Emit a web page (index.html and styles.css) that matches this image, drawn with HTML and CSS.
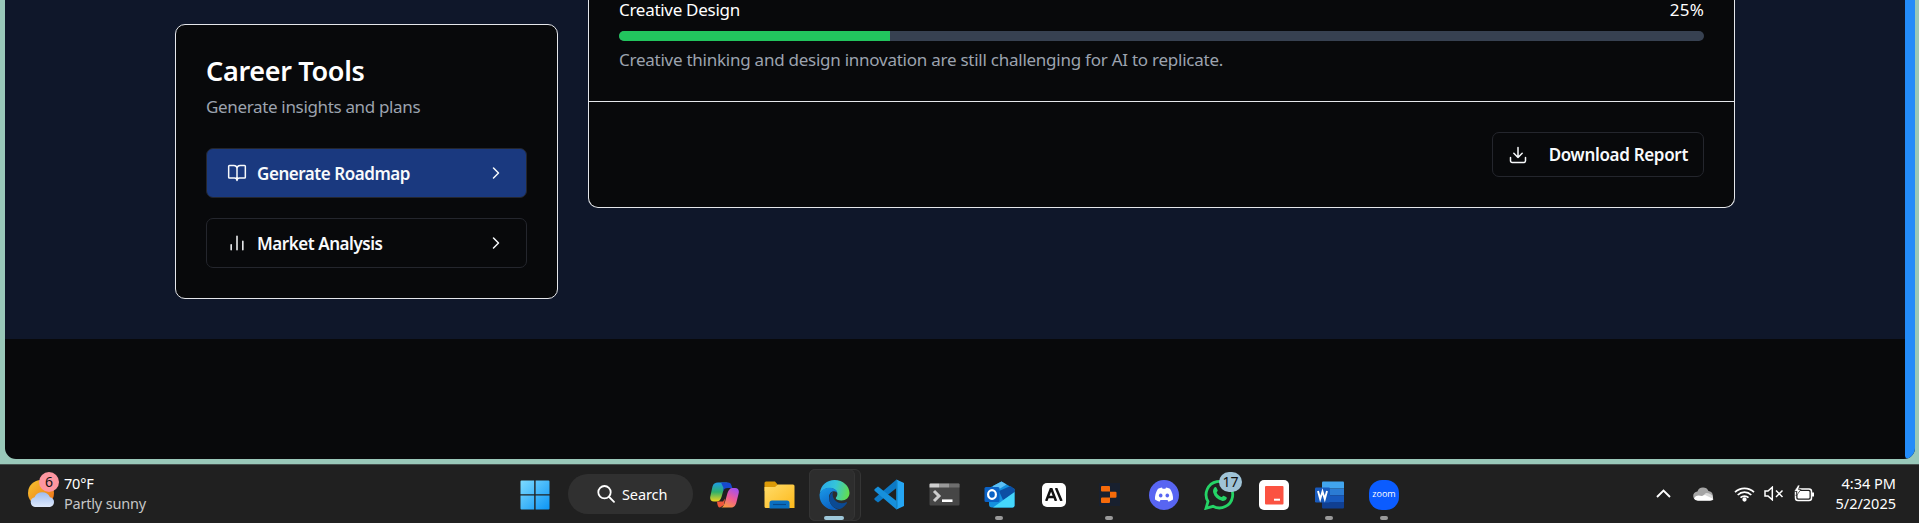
FILE: index.html
```html
<!DOCTYPE html>
<html lang="en">
<head>
<meta charset="utf-8">
<title>Career Tools</title>
<link rel="stylesheet" href="styles.css">
</head>
<body>
<div class="desktop">
  <div class="window">
    <main class="page">
      <aside class="card tools">
        <h2 class="tools-title">Career Tools</h2>
        <p class="tools-sub">Generate insights and plans</p>
        <button class="tool primary">
          <svg class="tool-icon" viewBox="0 0 24 24"><path d="M12 7v14M3 18a1 1 0 0 1-1-1V4a1 1 0 0 1 1-1h5a4 4 0 0 1 4 4 4 4 0 0 1 4-4h5a1 1 0 0 1 1 1v13a1 1 0 0 1-1 1h-6a3 3 0 0 0-3 3 3 3 0 0 0-3-3z"/></svg>
          <span>Generate Roadmap</span>
          <svg class="chev" viewBox="0 0 24 24"><path d="m9 18 6-6-6-6"/></svg>
        </button>
        <button class="tool">
          <svg class="tool-icon" viewBox="0 0 24 24"><path d="M5 20v-6M12 20V4M19 20V10"/></svg>
          <span>Market Analysis</span>
          <svg class="chev" viewBox="0 0 24 24"><path d="m9 18 6-6-6-6"/></svg>
        </button>
      </aside>
      <section class="card report">
        <div class="skill">
          <div class="skill-head"><span>Creative Design</span><span class="pct">25%</span></div>
          <div class="bar"><div class="fill" style="width:25%"></div></div>
          <p class="skill-note">Creative thinking and design innovation are still challenging for AI to replicate.</p>
        </div>
        <div class="report-foot">
          <button class="download">
            <svg class="dl-icon" viewBox="0 0 24 24"><path d="M21 15v4a2 2 0 0 1-2 2H5a2 2 0 0 1-2-2v-4M7 10l5 5 5-5M12 15V3"/></svg>
            <span>Download Report</span>
          </button>
        </div>
      </section>
    </main>
    <div class="scroll"></div>
  </div>
  <footer class="taskbar">
    <div class="weather">
      <div class="weather-icon">
        <svg width="30" height="32" viewBox="0 0 30 32">
          <defs>
            <linearGradient id="sun" x1="0" y1="0" x2="1" y2="1"><stop offset="0" stop-color="#f6c52f"/><stop offset="1" stop-color="#ee6c16"/></linearGradient>
            <linearGradient id="cloud" x1="0" y1="0" x2="0" y2="1"><stop offset="0" stop-color="#9dbcf0"/><stop offset="1" stop-color="#dfe9fb"/></linearGradient>
          </defs>
          <circle cx="13" cy="15" r="13" fill="url(#sun)"/>
          <path d="M7 29a5 5 0 0 1-.5-9.800 8.500 8.500 0 0 1 15.500 0A5 5 0 0 1 22 29z" fill="url(#cloud)"/>
        </svg>
        <span class="badge pink">6</span>
      </div>
      <div class="weather-text"><span>70°F</span><span class="dim">Partly sunny</span></div>
    </div>
    <div class="apps">
      <div class="app">
        <svg width="30" height="30" viewBox="0 0 30 30"><defs><linearGradient id="win" gradientUnits="userSpaceOnUse" x1="0" y1="0" x2="30" y2="30"><stop offset="0" stop-color="#7fdcff"/><stop offset="1" stop-color="#0a93f5"/></linearGradient></defs><path fill="url(#win)" d="M1.500.5H14.200V14.200H.5V1.500a1 1 0 0 1 1-1zM15.600.5H28.500a1 1 0 0 1 1 1V14.200H15.600zM.5 15.600H14.200V29.500H1.500a1 1 0 0 1-1-1zM15.600 15.600H29.500V28.500a1 1 0 0 1-1 1H15.600z"/></svg>
      </div>
      <div class="search"><svg width="18" height="18" viewBox="0 0 18 18" fill="none" stroke="#fff" stroke-width="1.800" stroke-linecap="round"><circle cx="7.500" cy="7.200" r="6.200"/><path d="m12.200 12 4.800 4.800"/></svg><span>Search</span></div>
      <div class="app">
        <svg width="29" height="26" viewBox="0 0 29 26"><defs>
          <linearGradient id="cp1" x1="0" y1="0" x2="0" y2="1"><stop offset="0" stop-color="#1d9be8"/><stop offset=".5" stop-color="#2fb06b"/><stop offset="1" stop-color="#f3d51d"/></linearGradient>
          <linearGradient id="cp2" x1=".8" y1="0" x2=".3" y2="1"><stop offset="0" stop-color="#a050f2"/><stop offset=".5" stop-color="#ee5b97"/><stop offset="1" stop-color="#fb9a3c"/></linearGradient></defs>
          <path d="M8 .5h11c-3 0-4 2-5 5.500l-2.500 9c-1 3-2.500 4.500-5 4.500H4c-3.500 0-4.500-2.500-3.500-6l2-9C3.500 1.500 5 .5 8 .5z" fill="url(#cp1)"/>
          <path d="M11 .5h7c2 0 3 1.200 3.500 3l.8 2.500H18c-3 0-4 1-5 3.500L13.500 6z" fill="#1748cf"/>
          <path d="M7 19.500h6l2-3-1 6.500-4 2.500c-2 0-2.500-2-3-6z" fill="#f0573b"/>
          <path d="M21 25.500H10c3 0 4-2 5-5.500l2.500-9c1-3 2.500-5 5-5H25c3.500 0 4.500 2.500 3.500 6l-2 8c-1 4-2.500 5.500-5.500 5.500z" fill="url(#cp2)"/></svg>
      </div>
      <div class="app">
        <svg width="31" height="28" viewBox="0 0 31 28"><defs><linearGradient id="fold" x1="0" y1="0" x2="1" y2="1"><stop offset="0" stop-color="#ffdc6a"/><stop offset="1" stop-color="#fdb91b"/></linearGradient></defs><path d="M.5 2a1.500 1.500 0 0 1 1.500-1.500h9L14 4H29v6H.5z" fill="#dc9a07"/><path d="M.5 6H11l3-2.500H29a1.500 1.500 0 0 1 1.500 1.500V27H2A1.500 1.500 0 0 1 .5 25.500z" fill="url(#fold)"/><path d="M5.500 27.500V22a2.500 2.500 0 0 1 2.500-2.500h15a2.500 2.500 0 0 1 2.500 2.500v5.500z" fill="#0a6fc0"/><path d="M9 23.500h13" stroke="#07498b" stroke-width="1.200"/></svg>
      </div>
      <div class="app active">
        <svg width="31" height="30" viewBox="0 0 31 30"><defs>
          <linearGradient id="e1" x1="0" y1=".3" x2="1" y2=".5"><stop offset="0" stop-color="#29a9ea"/><stop offset=".5" stop-color="#35c5d9"/><stop offset="1" stop-color="#62dd50"/></linearGradient>
          <linearGradient id="e2" x1="0" y1="0" x2=".5" y2="1"><stop offset="0" stop-color="#1a9ae8"/><stop offset="1" stop-color="#0b62c4"/></linearGradient></defs>
          <path d="M.8 13C2 5 8 0 15.500 0 24 0 30.500 6 30.500 13c0 4.500-3.500 7.500-8 7.500-3.500 0-5.700-1.200-5.700-2.300 0-.8 1.600-1.700 1.600-4.200 0-3.500-3.500-6-7.500-6C6.500 8 3 10 .8 13z" fill="url(#e1)"/>
          <path d="M.6 14C2 10 6 7.800 10.500 7.800c4.500 0 8 2.500 8 6.200 0-1.500-2-3-4-2.700-3 .4-4.500 3.200-4.500 6.200 0 5.500 4 11 9.500 12-1.300.3-2.600.5-4 .5C7 30-.3 23 .6 14z" fill="url(#e2)"/>
          <path d="M14 11.400c-4.500 3-5 9-1.500 13.600 2.500 3.300 6.500 4.500 8.500 4 3-1 5.500-3.500 7-6 .3-.7-.3-1-.9-.7-3 1.500-7.500 1.300-10.300-1.300C13.800 18.300 13 14.500 14 11.400z" fill="#0b4a93"/></svg>
        <i class="run wide"></i>
      </div>
      <div class="app">
        <svg width="31" height="31" viewBox="0 0 31 31"><path d="M22.500.5 30 4V27l-7.500 3.500z" fill="#25a6f4"/><path d="M22.500.5V9L4 23.500.8 21c-.6-.6-.6-1.300 0-1.900z" fill="#0c79c6"/><path d="M22.500 30.500V22L4 7.500.8 10c-.6.600-.6 1.300 0 1.900z" fill="#1690dc"/><path d="M22.500.5 24 3v25l-1.500 2.500z" fill="#1593de"/></svg>
      </div>
      <div class="app">
        <svg width="31" height="23" viewBox="0 0 31 23"><rect x=".5" y=".5" width="30" height="22" rx="1" fill="#464646"/><path d="M.5 1.500a1 1 0 0 1 1-1H10v4H.5z" fill="#cfcfcf"/><path d="M10 .5h10v4H10z" fill="#9a9a9a"/><path d="M20 .5h9.500a1 1 0 0 1 1 1v3H20z" fill="#6e6e6e"/><path d="m5 8 5 5-5 5" fill="none" stroke="#ccc" stroke-width="3"/><path d="M13 17.700h10.500" stroke="#fff" stroke-width="2.600"/></svg>
      </div>
      <div class="app">
        <svg width="31" height="27" viewBox="0 0 31 27"><path d="M5 7 17.500.5 30.500 8v16.500a2 2 0 0 1-2 2H8a3 3 0 0 1-3-3z" fill="#1490df"/><path d="m15 10 11.500-5L30.500 8v4L19 19z" fill="#0c4fa3"/><path d="m9 5 8.500-4.500 5 2.900L9 12z" fill="#5cc0f5"/><path d="M30.500 11v13.500a2 2 0 0 1-2 2H9z" fill="#45d7fb"/><rect x=".5" y="6" width="15" height="15" rx="1.500" fill="#0b62c5"/><ellipse cx="8" cy="13.500" rx="3.900" ry="4.400" fill="none" stroke="#fff" stroke-width="2.200"/></svg>
        <i class="run"></i>
      </div>
      <div class="app"><div class="ai"><svg width="18" height="13" viewBox="0 0 18 13" fill="none" stroke="#111" stroke-width="2.500"><path d="M1.200 13 5.800 1h.6L11 13M3 9h6M11 0l5.500 13"/></svg></div></div>
      <div class="app"><svg width="21" height="23" viewBox="0 0 21 23"><path d="M0 0h21v23H0z" fill="#18202f"/><path d="M3 3h7a1 1 0 0 1 1 1v4.500H3a1 1 0 0 1-1-1V4a1 1 0 0 1 1-1zM11 8.700h5.500a1 1 0 0 1 1 1v4a1 1 0 0 1-1 1H11zM3 14.500h8V19a1 1 0 0 1-1 1H3a1 1 0 0 1-1-1v-3.500a1 1 0 0 1 1-1z" fill="#f56a0a"/></svg><i class="run"></i></div>
      <div class="app"><svg width="30" height="30" viewBox="0 0 30 30"><circle cx="15" cy="15" r="15" fill="#5865f2"/><path d="M9 8.800q2-1 4-1.200l.6 1.200q1.400-.2 2.800 0L17 7.600q2 .2 4 1.200 3.300 5 3 10.700-2 1.600-4.500 2.200l-1-1.700h-7l-1 1.700Q8 21.100 6 19.500 5.700 13.800 9 8.800z" fill="#fff"/><ellipse cx="11.700" cy="15.500" rx="1.800" ry="2" fill="#5865f2"/><ellipse cx="18.300" cy="15.500" rx="1.800" ry="2" fill="#5865f2"/></svg></div>
      <div class="app"><svg width="31" height="31" viewBox="0 0 31 31"><path d="M2 29.300 4 22.500A13.300 13.300 0 1 1 9 27.300z" fill="none" stroke="#25d366" stroke-width="2.800"/><path d="M10.500 8.500c.6-.6 1.600-.5 2 .2l1.200 2.600c.3.800-1.200 1.800-1 2.500.9 2 2.600 3.500 4.600 4.300.8.200 1.500-1.600 2.300-1.400l2.600 1.300c.8.400.7 1.500.1 2.300-1 1.300-2.800 1.900-4.400 1.400-4.500-1.200-7.500-4-8.700-8.300-.5-1.800.2-3.700 1.300-4.900z" fill="#25d366"/></svg><span class="badge blue">17</span></div>
      <div class="app"><svg width="30" height="30" viewBox="0 0 30 30"><rect width="30" height="30" rx="5" fill="#fff"/><rect x="6" y="6" width="18.500" height="18.500" rx="1" fill="#fb5241"/><path d="M15 19.700h6" stroke="#fff" stroke-width="2"/></svg></div>
      <div class="app"><svg width="29" height="28" viewBox="0 0 29 28"><path d="M7 1.500A1 1 0 0 1 8 .5H28a1 1 0 0 1 1 1V7.500H7z" fill="#41a5ee"/><path d="M7 7.500H29V14.200H7z" fill="#2b7cd3"/><path d="M7 14.200H29V21H7z" fill="#185abd"/><path d="M7 21H29v5.500a1 1 0 0 1-1 1H8a1 1 0 0 1-1-1z" fill="#103f91"/><rect y="6.500" width="15" height="15" rx="1.300" fill="#185abd"/><path d="m3 10 2.200 8 2.300-7.500L9.800 18 12 10" fill="none" stroke="#fff" stroke-width="1.900"/></svg><i class="run"></i></div>
      <div class="app"><div class="zoom">zoom</div><i class="run"></i></div>
    </div>
    <div class="tray">
      <svg class="tr-up" width="15" height="9" viewBox="0 0 15 9" fill="none" stroke="#fff" stroke-width="1.900"><path d="m1 8 6.500-6.500L14 8"/></svg>
      <svg class="tr-cloud" width="21" height="14" viewBox="0 0 21 14"><path d="M5 13.500a4.500 4.500 0 0 1-.6-9A6 6 0 0 1 15.500 4 5 5 0 0 1 17 13.500z" fill="#a5a5a5"/><path d="M4 13.500 13 6q5 0 7 4c.4 2-1 3.500-3 3.500z" fill="#d8d8d8"/><path d="M1 11.500q2-4.500 8-2.500l3-1 8.500 4q-1 1.500-3 1.500H5q-3 0-4-2z" fill="#fff"/></svg>
      <svg class="tr-wifi" width="21" height="16" viewBox="0 0 21 16" fill="none" stroke="#fff" stroke-width="1.700"><path d="M1 6.200a13.500 13.500 0 0 1 19 0M3.700 9a9.600 9.600 0 0 1 13.600 0M6.500 11.700a5.700 5.700 0 0 1 8 0"/><circle cx="10.500" cy="13.500" r="1.300" fill="#fff"/></svg>
      <svg class="tr-vol" width="20" height="15" viewBox="0 0 20 15" fill="none" stroke="#fff" stroke-width="1.500"><path d="M1 5h3l4.300-3.800v12.600L4 10H1zM12 4.500l6.500 6.500M18.500 4.500 12 11"/></svg>
      <svg class="tr-bat" width="21" height="17" viewBox="0 0 21 17"><rect x="1.500" y="4" width="16" height="11.500" rx="2.500" fill="none" stroke="#fff" stroke-width="1.500"/><rect x="3.500" y="6" width="12" height="7.500" rx="1" fill="#fff"/><path d="M18 7.500h2v4h-2z" fill="#fff"/><path d="M4 0 0 6.500h3L2 11l5-6.500H4.500L6 0z" fill="#fff" stroke="#202020" stroke-width=".7"/></svg>
      <div class="clock"><span>4:34 PM</span><span>5/2/2025</span></div>
    </div>
  </footer>
</div>
</body>
</html>
```
FILE: styles.css
```css
* { box-sizing: border-box; }
body { margin: 0; font-family: "Noto Sans", "Open Sans", sans-serif; }
h2, p { margin: 0; }
button { font-family: inherit; }
span { white-space: nowrap; }
.desktop { width: 1919px; height: 523px; overflow: hidden; background: #99c8b9; display: flex; flex-direction: column; }
.window { height: 459px; margin: 0 4px 5px 5px; border-radius: 0 0 11px 11px; overflow: hidden; background: #08090b; display: flex; align-items: stretch; flex: none; }
.page { flex: 1; height: 339px; background: #0f172a; display: flex; align-items: flex-start; gap: 30px; padding-left: 170px; }
.scroll { width: 10px; background: #238cfa; border-radius: 0 0 10px 6px; }
.card { background: #08090b; border: 1px solid #e5e7eb; color: #fff; }
.tools { width: 383px; height: 275px; margin-top: 24px; border-radius: 10px; padding: 0 30px; display: flex; flex-direction: column; }
.tools-title { margin-top: 27px; height: 39px; line-height: 38px; font-size: 27px; font-weight: 600; letter-spacing: -0.31px; }
.tools-sub { height: 30px; line-height: 31px; font-size: 17px; letter-spacing: -0.34px; color: #9ca3af; margin-bottom: 27px; }
.tool { height: 50px; margin-bottom: 20px; border: 1px solid #24262d; border-radius: 7px; background: transparent; color: #f8fafc; display: flex; align-items: center; padding: 0 20px; font-size: 17px; font-weight: 600; letter-spacing: -0.45px; text-align: left; }
.tool span { flex: 1; margin-left: 10px; }
.primary { background: #1a397f; }
.tool-icon, .chev, .dl-icon { width: 20px; height: 20px; fill: none; stroke: #f8fafc; stroke-width: 1.800; stroke-linecap: round; stroke-linejoin: round; }
.report { width: 1147px; height: 208px; border-top: 0; border-radius: 0 0 10px 10px; }
.skill { height: 101px; padding: 0 30px; }
.skill-head { display: flex; justify-content: space-between; height: 31px; line-height: 20px; font-size: 17px; letter-spacing: -0.29px; }
.pct { letter-spacing: 0.2px; }
.bar { height: 10px; border-radius: 5px; background: #374151; overflow: hidden; margin-bottom: 4px; }
.fill { height: 10px; background: #22c55e; }
.skill-note { line-height: 30px; font-size: 17px; letter-spacing: -0.25px; color: #9ca3af; }
.report-foot { border-top: 1px solid #e5e7eb; padding: 30px; display: flex; justify-content: flex-end; }
.download { width: 212px; height: 45px; border: 1px solid #24262d; border-radius: 7px; background: transparent; color: #f8fafc; display: flex; align-items: center; justify-content: space-between; padding: 0 15px; font-size: 17px; font-weight: 600; letter-spacing: -0.32px; }
.taskbar { height: 59px; background: #202020; border-top: 1px solid #46514e; color: #fff; display: grid; grid-template-columns: 517px 1fr 263px; font-size: 14.500px; align-items: start; }
.weather { display: flex; padding: 7px 0 0 28px; }
.weather-icon { position: relative; width: 36px; padding-top: 6px; height: 46px; }
.badge { position: absolute; height: 20px; border-radius: 10px; color: #111; font-size: 14px; line-height: 20px; text-align: center; }
.pink { left: 11px; top: 0; width: 20px; background: #fd96a0; }
.blue { left: 18px; top: 2px; width: 23px; background: #9fc3d6; }
.weather-text { display: flex; flex-direction: column; line-height: 20px; padding-top: 1px; letter-spacing: -0.2px; }
.dim { color: #c6c6c6; }
.apps { display: flex; height: 58px; align-items: center; }
.app { position: relative; width: 55px; height: 50px; margin-top: 1px; display: flex; align-items: center; justify-content: center; flex: none; padding-right: 19px; padding-left: 0; }
/* Tile with a second edge behind it: the app has more than one window open */
.active::before, .active::after { content: ""; position: absolute; left: -7px; top: -1px; height: 50px; border: 1px solid #353535; border-radius: 6px; }
.active::before { width: 50px; background: #262626; }
.active::after { width: 44px; background: #2d2d2d; }
.active svg, .active .run { z-index: 1; }
.active svg { position: relative; }
.search { width: 125px; height: 40px; border-radius: 20px; background: #303030; display: flex; align-items: center; gap: 7px; padding-left: 29px; flex: none; margin: 0 13px 0 -4px; letter-spacing: -0.1px; }
.ai { width: 24px; height: 24px; background: #fff; border-radius: 5px; display: flex; align-items: center; justify-content: center; }
.zoom { width: 30px; height: 30px; border-radius: 13px; background: #0b5cff; font: 500 9px "Open Sans", sans-serif; text-align: center; line-height: 27px; }
.run { position: absolute; left: 14px; bottom: 0; width: 8px; height: 4px; border-radius: 2px; background: #9a9a9a; }
.wide { left: 8px; width: 20px; background: #9fc8da; }
.tray { display: flex; height: 58px; align-items: center; }
.tray svg { margin-top: -1px; }
.tr-cloud { margin-left: 22px; }
.tr-wifi { margin-left: 20px; }
.tr-vol { margin-left: 9px; }
.tr-bat { margin-left: 10px; }
.clock { margin-left: auto; margin-right: 23px; display: flex; flex-direction: column; text-align: right; line-height: 20px; margin-top: -2px; }
```
